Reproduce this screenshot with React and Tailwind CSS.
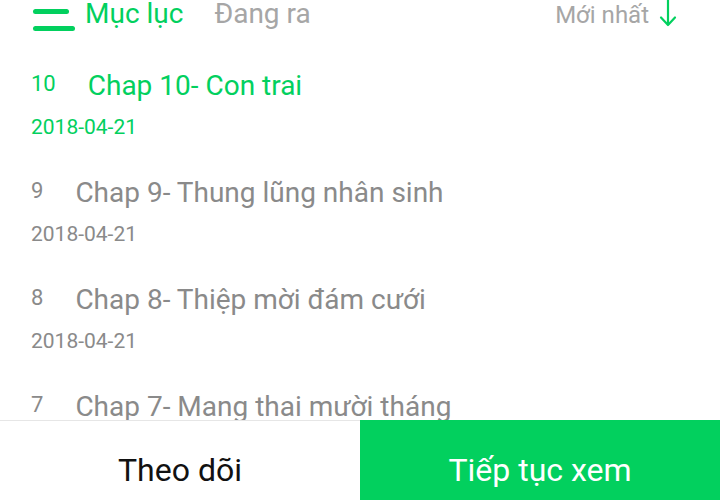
import React from "react";

const chapters = [
  { no: 10, title: "Chap 10- Con trai", date: "2018-04-21", active: true },
  { no: 9, title: "Chap 9- Thung lũng nhân sinh", date: "2018-04-21" },
  { no: 8, title: "Chap 8- Thiệp mời đám cưới", date: "2018-04-21" },
  { no: 7, title: "Chap 7- Mang thai mười tháng", date: "2018-04-21" },
  { no: 6, title: "Chap 6- Về nhà", date: "2018-04-21" },
];

function ArrowDown() {
  return (
    <svg width="18" height="28" viewBox="0 0 18 28" fill="none" className="ml-[10px] self-start">
      <path d="M9 0 V25" stroke="#02d05e" strokeWidth="2.2" />
      <path d="M2 17.5 L9 25 L16 17.5" stroke="#02d05e" strokeWidth="2.2" strokeLinecap="round" strokeLinejoin="round" />
    </svg>
  );
}

export default function App() {
  return (
    <div
      className="w-[720px] h-[500px] bg-white flex flex-col overflow-hidden"
      style={{ fontFamily: "Roboto, 'Noto Sans', sans-serif" }}
    >
      {/* header */}
      <div className="flex items-baseline pl-[33px] pr-[43px] h-[32px]">
        <div className="self-start flex flex-col gap-[12px] pt-[9px] mr-[10px]">
          <span className="block w-[36px] h-[5px] rounded-full bg-[#02d05e]"></span>
          <span className="block w-[42px] h-[5px] rounded-full bg-[#02d05e]"></span>
        </div>
        <span className="text-[28px] leading-[28px] text-[#02d05e]">Mục lục</span>
        <span className="text-[28px] leading-[28px] text-[#a6a6a6] ml-[31px]">Đang ra</span>
        <span className="ml-auto text-[24px] leading-none text-[#a6a6a6]">Mới nhất</span>
        <ArrowDown />
      </div>

      {/* chapter list */}
      <div className="flex-1 overflow-hidden pl-[31px] pt-[40px]">
        {chapters.map((c) => (
          <div key={c.no} className="h-[107px]">
            <div className="flex items-start">
              <span
                className={`text-[22px] leading-none mt-[1px] mr-[32px] ${
                  c.active ? "text-[#02d05e]" : "text-[#8a8a8a]"
                }`}
              >
                {c.no}
              </span>
              <span
                className={`text-[28px] leading-none ${c.active ? "text-[#02d05e]" : "text-[#8a8a8a]"}`}
              >
                {c.title}
              </span>
            </div>
            <div
              className={`mt-[17px] text-[21px] leading-none ${c.active ? "text-[#02d05e]" : "text-[#8a8a8a]"}`}
            >
              {c.date}
            </div>
          </div>
        ))}
      </div>

      {/* bottom bar */}
      <div className="h-[80px] flex shrink-0">
        <div className="w-1/2 border-t border-[#e6e6e6] flex justify-center pt-[33px]">
          <span className="text-[32px] leading-none text-[#111111]">Theo dõi</span>
        </div>
        <div className="w-1/2 bg-[#02d05e] flex justify-center pt-[34px]">
          <span className="text-[32px] leading-none text-white">Tiếp tục xem</span>
        </div>
      </div>
    </div>
  );
}
